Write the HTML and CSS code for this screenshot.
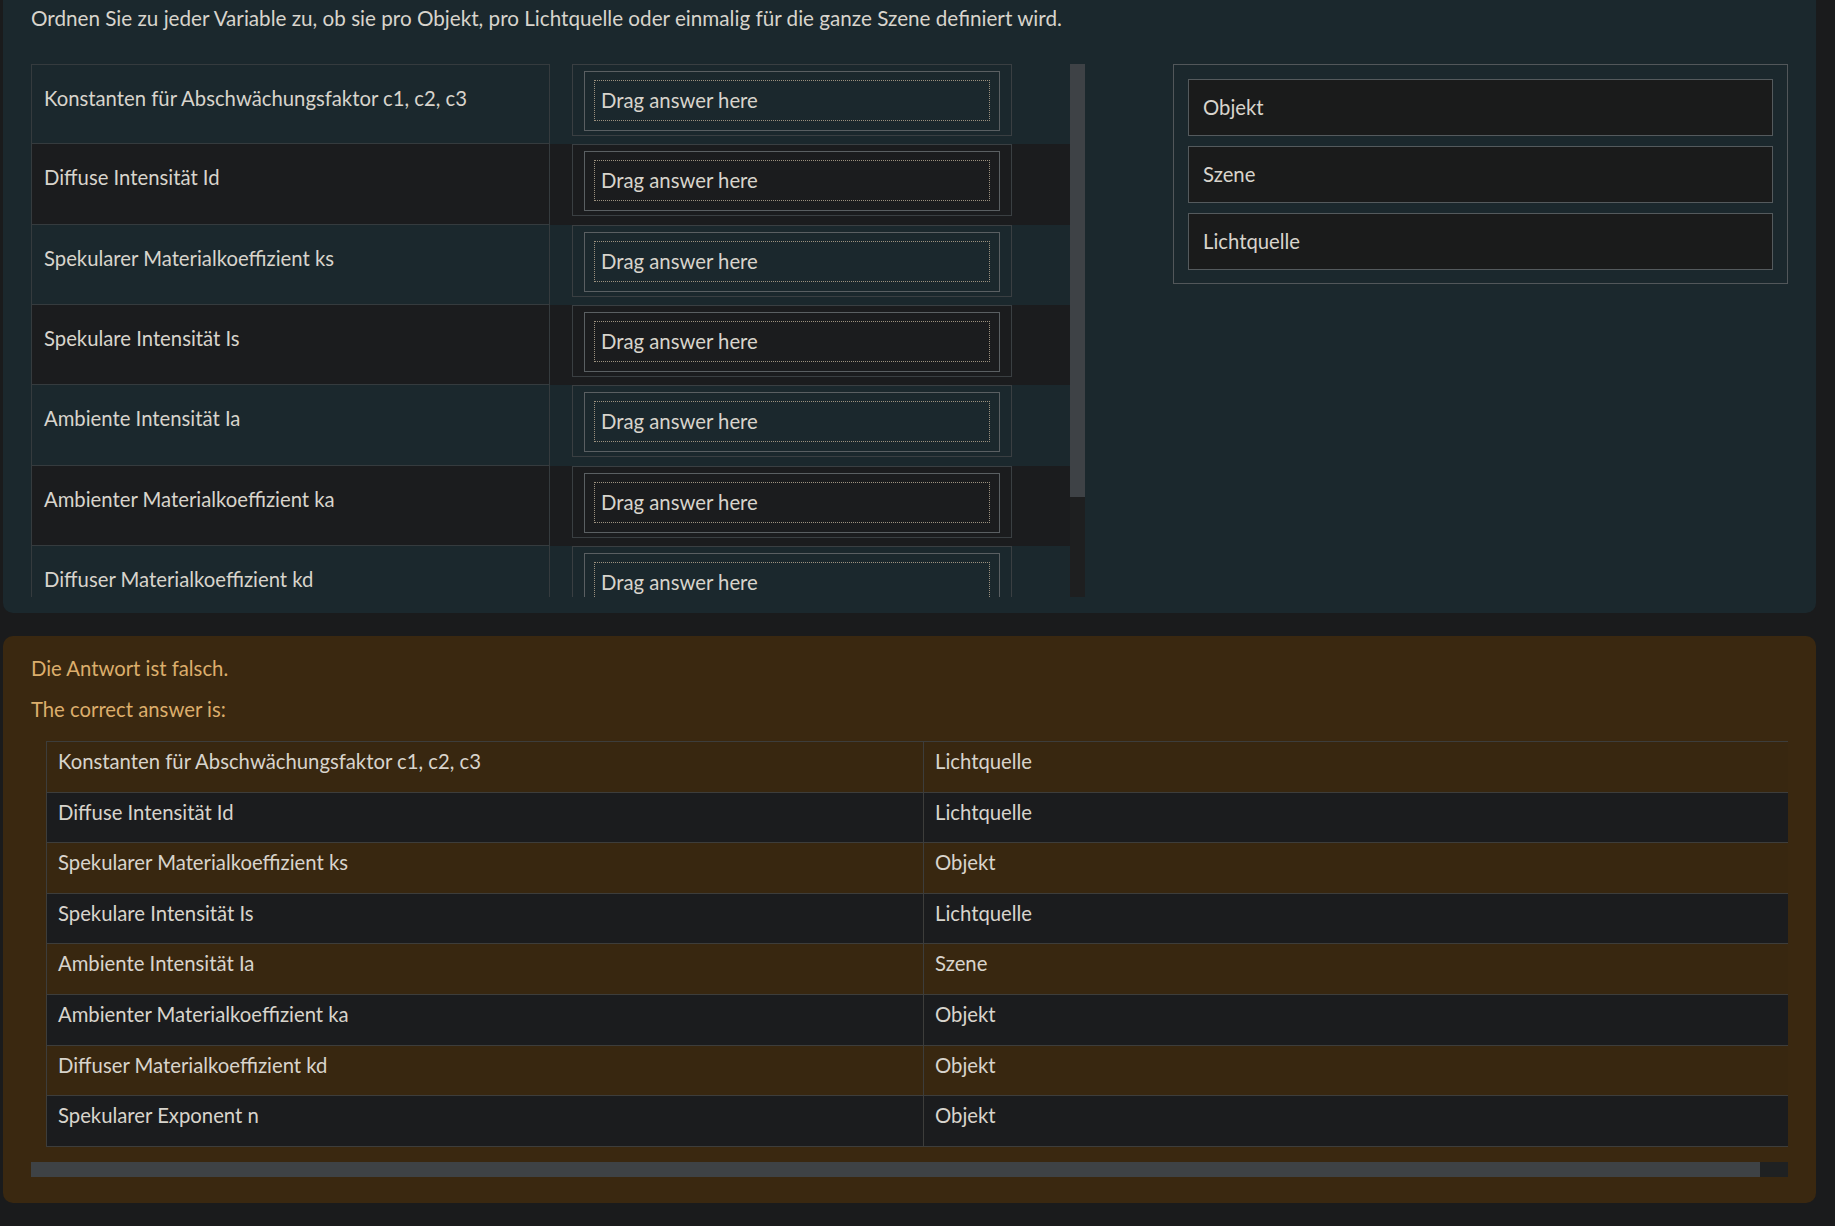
FILE: index.html
```html
<!DOCTYPE html>
<html lang="de">
<head>
<meta charset="utf-8">
<title>Zuordnung</title>
<link rel="stylesheet" href="styles.css">
</head>
<body>
<div class="page">
  <section class="q-panel">
    <p class="prompt">Ordnen Sie zu jeder Variable zu, ob sie pro Objekt, pro Lichtquelle oder einmalig für die ganze Szene definiert wird.</p>
    <div class="q-body">
      <div class="scroll-wrap">
        <div class="scroller">
          <div class="match">
            <div class="m-row odd"><div class="m-label first">Konstanten für Abschwächungsfaktor c1, c2, c3</div><div class="m-drop"><div class="drop-outer"><div class="drop-inner"><div class="drop-slot">Drag answer here</div></div></div></div></div>
            <div class="m-row even"><div class="m-label">Diffuse Intensität Id</div><div class="m-drop"><div class="drop-outer"><div class="drop-inner"><div class="drop-slot">Drag answer here</div></div></div></div></div>
            <div class="m-row odd"><div class="m-label">Spekularer Materialkoeffizient ks</div><div class="m-drop"><div class="drop-outer"><div class="drop-inner"><div class="drop-slot">Drag answer here</div></div></div></div></div>
            <div class="m-row even"><div class="m-label">Spekulare Intensität Is</div><div class="m-drop"><div class="drop-outer"><div class="drop-inner"><div class="drop-slot">Drag answer here</div></div></div></div></div>
            <div class="m-row odd"><div class="m-label">Ambiente Intensität Ia</div><div class="m-drop"><div class="drop-outer"><div class="drop-inner"><div class="drop-slot">Drag answer here</div></div></div></div></div>
            <div class="m-row even"><div class="m-label">Ambienter Materialkoeffizient ka</div><div class="m-drop"><div class="drop-outer"><div class="drop-inner"><div class="drop-slot">Drag answer here</div></div></div></div></div>
            <div class="m-row odd"><div class="m-label">Diffuser Materialkoeffizient kd</div><div class="m-drop"><div class="drop-outer"><div class="drop-inner"><div class="drop-slot">Drag answer here</div></div></div></div></div>
            <div class="m-row even"><div class="m-label">Spekularer Exponent n</div><div class="m-drop"><div class="drop-outer"><div class="drop-inner"><div class="drop-slot">Drag answer here</div></div></div></div></div>
          </div>
        </div>
        <div class="vbar"><div class="vbar-thumb"></div></div>
      </div>
      <div class="choices">
        <div class="choice">Objekt</div>
        <div class="choice">Szene</div>
        <div class="choice">Lichtquelle</div>
      </div>
    </div>
  </section>

  <section class="feedback">
    <p class="state">Die Antwort ist falsch.</p>
    <p class="label">The correct answer is:</p>
    <div class="hscroll">
      <table class="answer">
        <tr class="odd"><td class="c1">Konstanten für Abschwächungsfaktor c1, c2, c3</td><td>Lichtquelle</td></tr>
        <tr class="even"><td class="c1">Diffuse Intensität Id</td><td>Lichtquelle</td></tr>
        <tr class="odd"><td class="c1">Spekularer Materialkoeffizient ks</td><td>Objekt</td></tr>
        <tr class="even"><td class="c1">Spekulare Intensität Is</td><td>Lichtquelle</td></tr>
        <tr class="odd"><td class="c1">Ambiente Intensität Ia</td><td>Szene</td></tr>
        <tr class="even"><td class="c1">Ambienter Materialkoeffizient ka</td><td>Objekt</td></tr>
        <tr class="odd"><td class="c1">Diffuser Materialkoeffizient kd</td><td>Objekt</td></tr>
        <tr class="even"><td class="c1">Spekularer Exponent n</td><td>Objekt</td></tr>
      </table>
    </div>
    <div class="hbar"><div class="hbar-thumb"></div></div>
  </section>
</div>
</body>
</html>
```

FILE: styles.css
```css
* { box-sizing: border-box; }

html, body {
  margin: 0;
  padding: 0;
  background: #1a1b1c;
}

body {
  font-family: Lato, "Open Sans", sans-serif;
  font-size: 20.3px;
  line-height: 30px;
  color: #d8d4cc;
}

.page {
  padding: 0 19px 0 3px;
}

/* ---------- question panel ---------- */
.q-panel {
  background: #1b282d;
  border-radius: 0 0 10px 10px;
  padding: 3px 28px 16px 28px;
}

.prompt {
  margin: 0 0 31px 0;
  font-size: 20.67px;
}

.q-body {
  display: flex;
  align-items: flex-start;
  gap: 88px;
}

.scroll-wrap {
  display: flex;
  height: 533px;
}

.scroller {
  width: 1039px;
  height: 533px;
  overflow: hidden;
}

.vbar {
  width: 15px;
  height: 533px;
  background: #1e1f20;
}

.vbar-thumb {
  height: 433px;
  background: #3e4246;
}

.match {
  width: 1039px;
}

.m-row {
  display: flex;
  height: 80.36px;
}

.m-row.odd { background: #1b282d; }
.m-row.even { background: #1b1c1e; }

.m-label {
  width: 519px;
  border: 1px solid #353b3e;
  border-top: none;
  padding: 18px 12px 0 12px;
}

.m-label.first { border-top: 1px solid #353b3e; }

.m-drop {
  padding-left: 22px;
}

.drop-outer {
  width: 440px;
  height: 72px;
  border: 1px solid #3a3f42;
  padding: 6px 11px 4px 11px;
}

.drop-inner {
  height: 60px;
  border: 1px solid #5a5f62;
  padding: 8px 9px 9px 9px;
}

.drop-slot {
  height: 41px;
  border: 1px dotted #9c917f;
  padding: 0 0 1px 6px;
  display: flex;
  align-items: center;
}

.choices {
  width: 615px;
  border: 1px solid #52575a;
  padding: 14px 14px 13px 14px;
}

.choice {
  height: 57px;
  background: #1a1b1b;
  border: 1px solid #545a5d;
  padding: 0 0 2px 14px;
  display: flex;
  align-items: center;
  margin-bottom: 10px;
}

.choice:last-child { margin-bottom: 0; }

/* ---------- feedback panel ---------- */
.feedback {
  margin-top: 23px;
  background: #3a2810;
  border-radius: 10px;
  padding: 17px 28px 26px 28px;
  color: #dcae6c;
}

.feedback p { margin: 0; }
.feedback .state { margin-bottom: 11px; }
.feedback .label { margin-bottom: 17px; }

.hscroll {
  overflow: hidden;
}

.hbar {
  height: 15px;
  background: #1f2122;
}

.hbar-thumb {
  width: 1729px;
  height: 15px;
  background: #3e4245;
}

.answer {
  width: 1770px;
  margin: 0 0 15px 15px;
  border-collapse: collapse;
  color: #d8d4cc;
}

.answer tr { height: 50.6px; }
.answer tr.odd { background: #382710; }
.answer tr.even { background: #1b1c1e; }

.answer td {
  border: 1px solid #3d3d3b;
  padding: 4px 12px 0 11px;
  vertical-align: top;
}

.answer td.c1 { width: 877px; }
```
